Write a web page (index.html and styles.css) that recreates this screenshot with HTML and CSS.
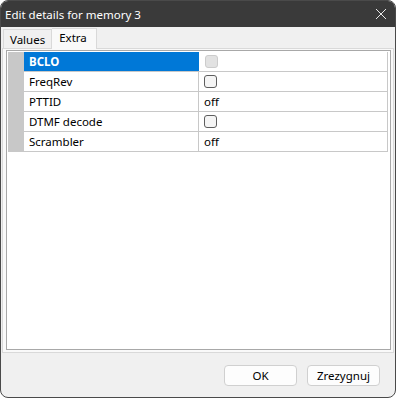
FILE: index.html
```html
<!DOCTYPE html>
<html lang="en">
<head>
  <meta charset="UTF-8">
  <title>Edit details for memory 3</title>
  <link rel="stylesheet" href="styles.css">
</head>
<body>

  <div class="window">
    <!-- title bar -->
    <div class="titlebar">
      <span class="title">Edit details for memory 3</span>
      <svg class="close" width="12" height="12" viewBox="0 0 12 12">
        <path d="M1,1 L11,11 M11,1 L1,11"></path>
      </svg>
    </div>

    <!-- tabs -->
    <div class="tabs">
      <div class="tab">Values</div>
      <div class="tab active">Extra</div>
    </div>

    <div class="panel">
      <div class="grid">
        <div class="gridbody">
          <div class="rowheads"></div>
          <div class="rows">
            <div class="row">
              <div class="name selected">BCLO</div>
              <div class="value"><span class="check disabled"></span></div>
            </div>
            <div class="row">
              <div class="name">FreqRev</div>
              <div class="value"><span class="check"></span></div>
            </div>
            <div class="row">
              <div class="name">PTTID</div>
              <div class="value">off</div>
            </div>
            <div class="row">
              <div class="name">DTMF decode</div>
              <div class="value"><span class="check"></span></div>
            </div>
            <div class="row">
              <div class="name">Scrambler</div>
              <div class="value">off</div>
            </div>
          </div>
        </div>
      </div>
    </div>

    <!-- buttons -->
    <div class="buttons">
      <div class="btn">OK</div>
      <div class="btn">Zrezygnuj</div>
    </div>
  </div>

</body>
</html>
```

FILE: styles.css
```css
body{
  margin: 0;
  background: #ffffff;
  font-family: "Noto Sans", "Open Sans", sans-serif;
  font-size: 11.5px;
  color: #000000;
}

.window{
  width: 396px;
  height: 398px;
  box-sizing: border-box;
  border: 1px solid #4a4a4a;
  border-radius: 8px;
  background: #f0f0f0;
  overflow: hidden;
  display: flex;
  flex-direction: column;
}

.titlebar{
  height: 26px;
  flex: none;
  background: #3a3a3a;
  color: #ffffff;
  display: flex;
  align-items: center;
  justify-content: space-between;
  padding: 0 8px 0 4px;
  font-size: 11.5px;
}

.close{
  fill: none;
  stroke: #e8e8e8;
  stroke-width: 1;
  margin-top: -1px;
}

/* tabs */
.tabs{
  display: flex;
  align-items: flex-end;
  height: 21px;
  padding-left: 2px;
  flex: none;
}

.tab{
  height: 19px;
  padding: 0 6px;
  line-height: 19px;
  border: 1px solid #d9d9d9;
  border-bottom: none;
  background: #f0f0f0;
  box-sizing: border-box;
}

.tab.active{
  height: 21px;
  line-height: 18px;
  padding: 0 9px 0 7px;
  background: #f9f9f9;
  border-left: none;
  position: relative;
  top: 1px;
}

.panel{
  margin: 0 1px 0 1px;
  height: 305px;
  flex: none;
  border: 1px solid #d9d9d9;
  background: #f9f9f9;
  box-sizing: border-box;
  padding: 1px 2px 2px 3px;
}

.grid{
  height: 100%;
  box-sizing: border-box;
  border: 1px solid #a8a8a8;
  background: #ffffff;
  padding: 1px;
}

.gridbody{
  display: flex;
}

.rowheads{
  width: 16px;
  height: 100px;
  background: #c8c8c8;
  flex: none;
}

.rows{
  flex: 1;
  margin-right: 1px;
}

.row{
  display: flex;
  height: 20px;
  box-sizing: border-box;
  border-bottom: 1px solid #c8c8c8;
}

.name{
  width: 175px;
  padding-left: 5px;
  line-height: 19px;
  box-sizing: border-box;
  border-right: 1px solid #c8c8c8;
}

.name.selected{
  background: #0078d7;
  color: #ffffff;
  font-weight: 700;
  border-right: 1px solid #ffffff;
  width: 176px;
}

.value{
  flex: 1;
  padding-left: 5px;
  line-height: 19px;
  display: flex;
  align-items: center;
  border-right: 1px solid #c8c8c8;
}

.check{
  display: block;
  width: 13px;
  height: 13px;
  box-sizing: border-box;
  border: 1px solid #5e5e5e;
  border-radius: 3px;
  background: #f5f5f5;
}

.check.disabled{
  border-color: #cccccc;
  background: #e2e2e2;
}

/* bottom buttons */
.buttons{
  flex: 1;
  display: flex;
  justify-content: flex-end;
  align-items: flex-start;
  padding: 12px 15px 0 0;
  gap: 10px;
}

.btn{
  width: 73px;
  height: 21px;
  box-sizing: border-box;
  border: 1px solid #d0d0d0;
  border-radius: 4px;
  background: #fdfdfd;
  text-align: center;
  line-height: 19px;
}
```
